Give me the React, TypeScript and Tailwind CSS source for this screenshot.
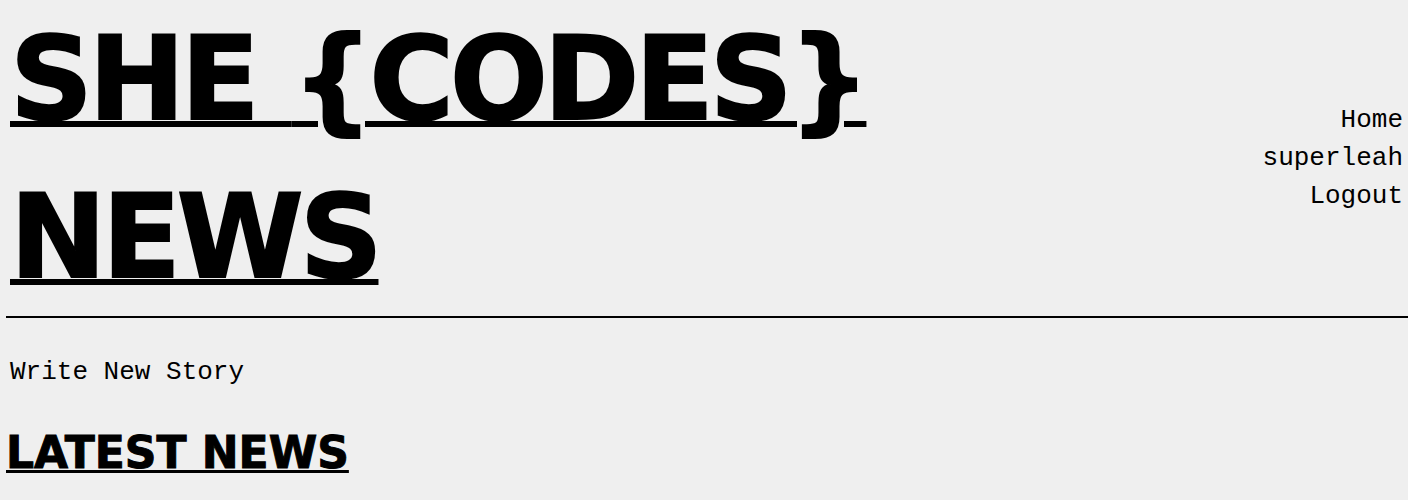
export default function App() {
  return (
    <div className="min-h-[500px] bg-[#efefef] text-black">
      <header className="flex items-center justify-between pl-[10px] pr-[5px]">
        <h1 className="font-['DejaVu_Sans',sans-serif] text-[115px] font-bold leading-[158px] tracking-[-4px] [-webkit-text-stroke:2px_black]">
          <a href="#" className="underline decoration-[6px] underline-offset-[2px]">
            SHE {'{CODES}'}
            <br />
            NEWS
          </a>
        </h1>
        <nav className="flex flex-col items-end font-['Liberation_Mono',monospace] text-[26px] leading-[38px]">
          <a href="#">Home</a>
          <a href="#">superleah</a>
          <a href="#">Logout</a>
        </nav>
      </header>
      <hr className="ml-[6px] border-t-2 border-black" />
      <main className="pl-[10px]">
        <a href="#" className="mt-[39px] block font-['Liberation_Mono',monospace] text-[26px] leading-[30px]">
          Write New Story
        </a>
        <h2 className="ml-[-4px] mt-[40px] font-['DejaVu_Sans',sans-serif] text-[44px] font-bold leading-[52px] underline decoration-[3px] [-webkit-text-stroke:1px_black]">
          LATEST NEWS
        </h2>
      </main>
    </div>
  );
}
